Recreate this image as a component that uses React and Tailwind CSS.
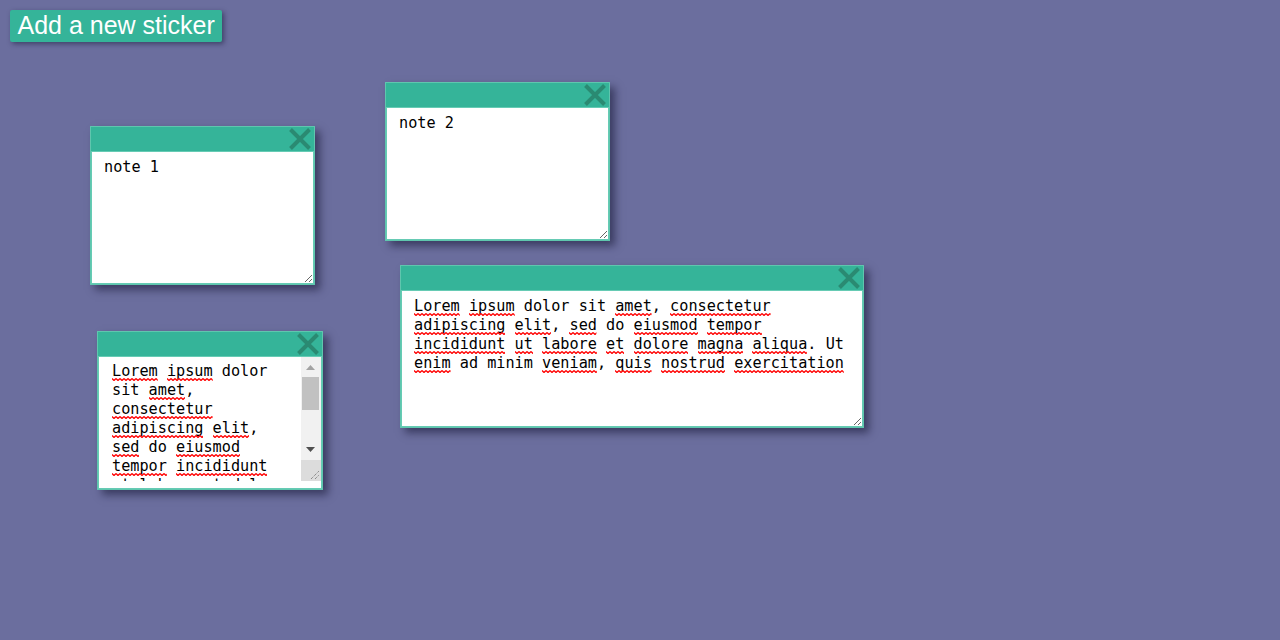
import React from "react";

const LOREM_WORDS = [
  ["Lorem", 1], ["ipsum", 1], ["dolor", 0], ["sit", 0], ["amet", 1, ","], ["consectetur", 1],
  ["adipiscing", 1], ["elit", 1, ","], ["sed", 1], ["do", 0], ["eiusmod", 1], ["tempor", 1],
  ["incididunt", 1], ["ut", 1], ["labore", 1], ["et", 1], ["dolore", 1], ["magna", 1], ["aliqua", 1, "."], ["Ut", 0],
  ["enim", 1], ["ad", 0], ["minim", 0], ["veniam", 1, ","], ["quis", 1], ["nostrud", 1], ["exercitation", 1],
];

function Squiggle() {
  return (
    <svg className="pointer-events-none absolute left-0 top-[calc(100%-2px)] h-[3px] w-full" aria-hidden="true">
      <rect x="0" y="0" width="100%" height="3" fill="url(#spell-wave)" />
    </svg>
  );
}

function Lorem() {
  return (
    <>
      {LOREM_WORDS.map(([w, err, punct], i) => (
        <React.Fragment key={i}>
          {err ? (
            <span className="relative">
              {w}
              <Squiggle />
            </span>
          ) : (
            <span>{w}</span>
          )}
          {punct || ""}
          {i < LOREM_WORDS.length - 1 ? " " : ""}
        </React.Fragment>
      ))}
    </>
  );
}

function CloseIcon() {
  return (
    <svg width="22" height="22" viewBox="0 0 22 22" className="block">
      <path d="M1.5 1.5 L20.5 20.5 M20.5 1.5 L1.5 20.5" stroke="#2a8a72" strokeWidth="4" strokeLinecap="butt" fill="none" />
    </svg>
  );
}

const MONO = { fontFamily: '"DejaVu Sans Mono", monospace' };

function Shell({ left, top, width, children }) {
  return (
    <div
      className="absolute border border-[#5fc6ae] bg-[#35b499] shadow-[5px_5px_8px_rgba(20,20,50,0.55)]"
      style={{ left, top, width }}
    >
      <div className="flex h-[24px] items-center justify-end pr-[3px]">
        <CloseIcon />
      </div>
      {children}
    </div>
  );
}

function Sticker({ left, top, width, bodyHeight, children }) {
  return (
    <Shell left={left} top={top} width={width}>
      <div
        className="resize overflow-auto border border-[#66cbb4] bg-white pl-[12px] pr-[13px] pt-[6px] text-[15.2px] leading-[19px] text-black"
        style={{ height: bodyHeight, ...MONO }}
      >
        {children}
      </div>
    </Shell>
  );
}

function Grip() {
  return (
    <svg width="10" height="10" viewBox="0 0 10 10" className="block">
      <path d="M1 9 L9 1 M5 9 L9 5" stroke="#6b6b6b" strokeWidth="1" strokeDasharray="1 1" fill="none" />
    </svg>
  );
}

function ScrollSticker({ left, top, width }) {
  return (
    <Shell left={left} top={top} width={width}>
      <div className="border border-[#66cbb4] bg-white pb-[6px]" style={{ height: 133 }}>
        <div className="flex h-[124px]">
          <div
            className="flex-1 overflow-hidden pl-[13px] pr-[9px] pt-[5px] text-[15.2px] leading-[19px] text-black"
            style={MONO}
          >
            <Lorem />
          </div>
          <div className="flex w-[20px] flex-col">
            <div className="flex flex-1 flex-col bg-[#f1f1f1] pl-[1px] pr-[2px]">
              <div className="flex h-[17px] items-center justify-center pt-[4px]">
                <svg width="9" height="5" viewBox="0 0 9 5" className="block">
                  <path d="M0 5 L4.5 0 L9 5 Z" fill="#a3a3a3" />
                </svg>
              </div>
              <div className="mt-[3px] h-[33px] bg-[#c1c1c1]" />
              <div className="flex-1" />
              <div className="flex h-[20px] items-center justify-center pb-[2px]">
                <svg width="9" height="5" viewBox="0 0 9 5" className="block">
                  <path d="M0 0 L9 0 L4.5 5 Z" fill="#505050" />
                </svg>
              </div>
            </div>
            <div className="flex h-[21px] items-end justify-end bg-[#dcdcdc] pb-[1px] pr-[1px]">
              <Grip />
            </div>
          </div>
        </div>
      </div>
    </Shell>
  );
}

export default function App() {
  return (
    <div className="relative h-[640px] w-full overflow-hidden bg-[#6b6e9e]" style={{ fontFamily: '"Liberation Sans", Arial, sans-serif' }}>
      <svg width="0" height="0" className="absolute">
        <defs>
          <pattern id="spell-wave" patternUnits="userSpaceOnUse" width="4" height="3">
            <path d="M0 0.5 L2 2.5 L4 0.5" stroke="#ff0000" strokeWidth="1.3" fill="none" />
          </pattern>
        </defs>
      </svg>
      <div className="p-[10px]">
        <button className="rounded-[2px] bg-[#35b499] px-[7.5px] pt-[1px] pb-[3px] text-[25px] leading-[28px] text-white shadow-[2px_2px_5px_rgba(20,20,50,0.5)]">
          Add a new sticker
        </button>
      </div>

      <Sticker left={90} top={126} width={225} bodyHeight={133}>
        note 1
      </Sticker>
      <Sticker left={385} top={82} width={225} bodyHeight={133}>
        note 2
      </Sticker>
      <Sticker left={400} top={265} width={464} bodyHeight={137}>
        <Lorem />
      </Sticker>
      <ScrollSticker left={97} top={331} width={226} />
    </div>
  );
}
